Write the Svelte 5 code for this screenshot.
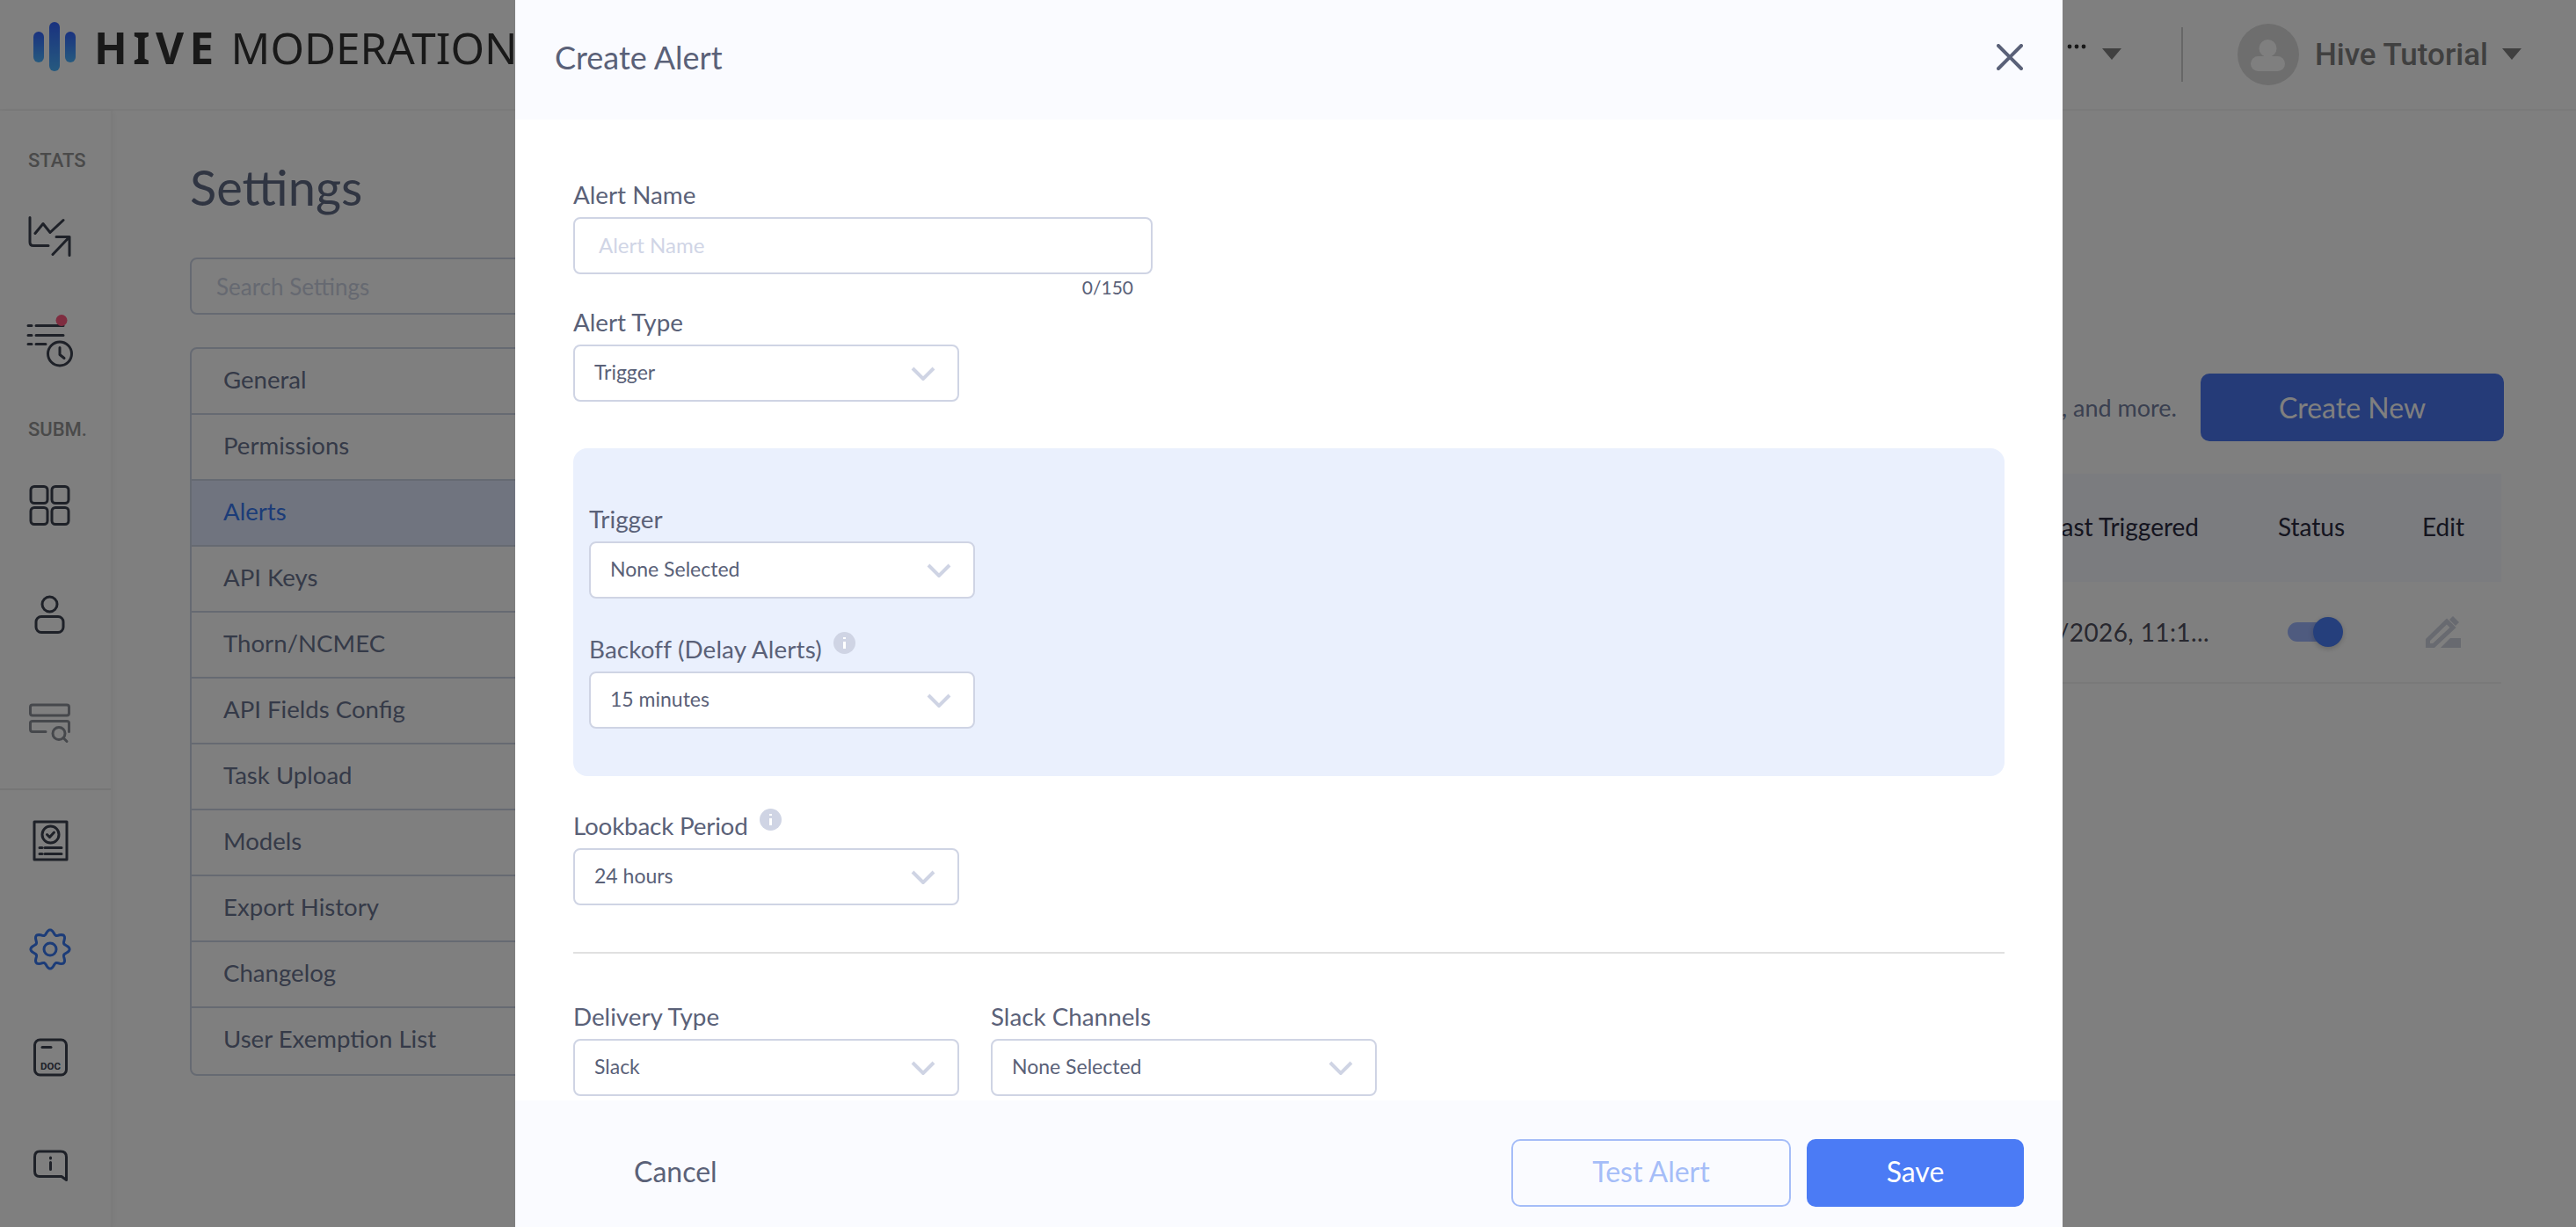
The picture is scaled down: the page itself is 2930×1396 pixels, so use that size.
<script lang="ts">
	const settingsItems = ['General', 'Permissions', 'Alerts', 'API Keys', 'Thorn/NCMEC', 'API Fields Config', 'Task Upload', 'Models', 'Export History', 'Changelog', 'User Exemption List'];

	// wavy 8-lobe outline for the gear icon
	const gearPath = (() => {
		const pts = [];
		for (let i = 0; i < 96; i++) {
			const a = (i / 96) * Math.PI * 2;
			const r = 19.5 + 2.6 * Math.cos(a * 8);
			pts.push(`${(57.5 + r * Math.cos(a - Math.PI / 2)).toFixed(2)} ${(1079.5 + r * Math.sin(a - Math.PI / 2)).toFixed(2)}`);
		}
		return 'M' + pts.join('L') + 'Z';
	})();
</script>

<div class="page">
	<header class="topbar">
		<div class="logo">
			<svg width="48" height="56" viewBox="0 0 48 56">
				<defs>
					<linearGradient id="lg" x1="0" y1="0" x2="0" y2="1">
						<stop offset="0" stop-color="#3464ff" />
						<stop offset="1" stop-color="#4cb4ff" />
					</linearGradient>
				</defs>
				<rect x="0" y="11" width="12" height="35" rx="6" fill="url(#lg)" />
				<rect x="18" y="0" width="12" height="56" rx="6" fill="url(#lg)" />
				<rect x="36" y="11" width="12" height="35" rx="6" fill="url(#lg)" />
			</svg>
			<span class="logo-text"><b>HIVE</b> MODERATION</span>
		</div>
		<div class="top-right">
			<svg class="dots" width="22" height="6" viewBox="0 0 22 6">
				<circle cx="3" cy="3" r="2.4" /><circle cx="11" cy="3" r="2.4" /><circle cx="19" cy="3" r="2.4" />
			</svg>
			<span class="caret"></span>
			<span class="vr"></span>
			<svg class="avatar" width="70" height="70" viewBox="0 0 70 70">
				<circle cx="35" cy="35" r="35" fill="#dcdcdc" />
				<circle cx="34.500" cy="28" r="10" fill="#fff" />
				<rect x="15" y="37" width="39" height="17" rx="8.500" fill="#fff" />
			</svg>
			<span class="user">Hive Tutorial</span>
			<span class="caret"></span>
		</div>
	</header>

	<div class="main">
		<nav class="sidebar">
			<div class="side-label">STATS</div>
			<div class="side-item">
				<svg class="ic" width="60" height="60" viewBox="27 237.500 60 60">
					<path d="M34 247V275Q34 279 38 279H55M40 265L49 254L57 264L72 250M60 289L79 269M64 269H79V290" />
				</svg>
			</div>
			<div class="side-item">
				<svg class="ic" width="70" height="70" viewBox="22 355.500 70 70">
					<path d="M41 370H72M41 381H72M41 391H52M32 370H36M32 381H36M32 391H36" />
					<circle cx="68" cy="402" r="13.500" />
					<path d="M68 395V403L73 407" />
					<circle class="dot" cx="70" cy="364" r="6.500" />
				</svg>
			</div>
			<div class="side-label second">SUBM.</div>
			<div class="side-item">
				<svg class="ic" width="60" height="60" viewBox="27 543.500 60 60">
					<rect x="35" y="553" width="19" height="19" rx="4" />
					<rect x="59" y="553" width="19" height="19" rx="4" />
					<rect x="35" y="577" width="19" height="19" rx="4" />
					<rect x="59" y="577" width="19" height="19" rx="4" />
				</svg>
			</div>
			<div class="side-item">
				<svg class="ic" width="60" height="60" viewBox="27 666.500 60 60">
					<circle cx="56.500" cy="687" r="8.500" />
					<rect x="41" y="701" width="31" height="18" rx="6" />
				</svg>
			</div>
			<div class="side-item">
				<svg class="ic faded" width="60" height="60" viewBox="27 789.500 60 60">
					<rect x="34.500" y="801.500" width="44" height="12" rx="2.500" />
					<path d="M52 832H37Q34.500 832 34.500 829V822Q34.500 820 37 820H76Q78.500 820 78.500 822V832" />
					<circle cx="67" cy="834" r="7" />
					<path d="M72 839L76 843" />
				</svg>
			</div>
			<div class="side-sep"></div>
			<div class="side-item">
				<svg class="ic" width="60" height="60" viewBox="27 930.500 60 60">
					<rect x="39" y="934.500" width="37" height="43" />
					<circle cx="57.500" cy="949" r="9.500" />
					<path d="M53.500 949L56.500 952L61.500 946.500M45 964H48M51 964H70M45 971H48M51 971H70" />
				</svg>
			</div>
			<div class="side-item">
				<svg class="ic gear" width="60" height="60" viewBox="27.500 1053.500 60 60">
					<path d={gearPath} />
					<circle cx="57.500" cy="1079.500" r="7" />
				</svg>
			</div>
			<div class="side-item">
				<svg class="ic" width="60" height="60" viewBox="27 1176.500 60 60">
					<rect x="39.500" y="1182.500" width="36" height="40" rx="6" />
					<path d="M48 1191H58" />
					<text x="57.500" y="1216" class="doc">DOC</text>
				</svg>
			</div>
			<div class="side-item">
				<svg class="ic" width="60" height="60" viewBox="27 1299.500 60 60">
					<path d="M45 1309.500H69Q75.500 1309.500 75.500 1316V1342L70 1338H45Q39.500 1338 39.500 1332V1316Q39.500 1309.500 45 1309.500Z" />
					<path d="M57.500 1322V1330M57.500 1316.500V1317.500" />
				</svg>
			</div>
		</nav>

		<section class="content">
			<div class="settings-col">
				<h1>Settings</h1>
				<div class="search">Search Settings</div>
				<ul class="settings-list">
					{#each settingsItems as item}
						<li class:active={item === 'Alerts'}>{item}</li>
					{/each}
				</ul>
			</div>
			<div class="alerts-col">
				<div class="alerts-head">
					<span class="blurb">Set up alerts for model changes, and more.</span>
					<button class="create">Create New</button>
				</div>
				<div class="table">
					<div class="t-row t-header">
						<span>Name</span>
						<span class="last">Last Triggered</span>
						<span>Status</span>
						<span>Edit</span>
					</div>
					<div class="t-row t-body">
						<span>Alert</span>
						<span class="last date">1/7/2026, 11:1...</span>
						<span class="toggle"><i></i></span>
						<svg class="edit" width="40" height="36" viewBox="0 0 40 36">
							<path class="outline" d="M2.500 33.500V27L24 6L31 13L9 33.500Z" />
							<path d="M27 4L31 0L38 7L34 11Z" />
							<path d="M28 25H40V36H17Z" />
						</svg>
					</div>
				</div>
			</div>
		</section>
	</div>
</div>

<div class="overlay">
	<div class="modal">
		<div class="modal-head">
			<span class="modal-title">Create Alert</span>
			<svg class="close" width="30" height="30" viewBox="0 0 30 30">
				<path d="M2 2L28 28M28 2L2 28" />
			</svg>
		</div>

		<div class="modal-body">
			<div class="field">
				<div class="label">Alert Name</div>
				<div class="input">Alert Name</div>
				<div class="counter">0/150</div>
			</div>
			<div class="field">
				<div class="label">Alert Type</div>
				{@render select('Trigger')}
			</div>

			<div class="panel">
				<div class="field">
					<div class="label">Trigger</div>
					{@render select('None Selected')}
				</div>
				<div class="field backoff">
					<div class="label">Backoff (Delay Alerts) {@render info()}</div>
					{@render select('15 minutes')}
				</div>
			</div>

			<div class="field lookback">
				<div class="label">Lookback Period {@render info()}</div>
				{@render select('24 hours')}
			</div>

			<hr />

			<div class="delivery">
				<div class="field">
					<div class="label">Delivery Type</div>
					{@render select('Slack')}
				</div>
				<div class="field">
					<div class="label">Slack Channels</div>
					{@render select('None Selected')}
				</div>
			</div>
		</div>

		<div class="modal-foot">
			<button class="cancel">Cancel</button>
			<div class="foot-right">
				<button class="test">Test Alert</button>
				<button class="save">Save</button>
			</div>
		</div>
	</div>
</div>

{#snippet select(value)}
	<div class="select">
		<span>{value}</span>
		<svg width="28" height="16" viewBox="0 0 28 16"><path d="M2 2L14 14L26 2" /></svg>
	</div>
{/snippet}

{#snippet info()}
	<svg class="info" width="25" height="25" viewBox="0 0 25 25">
		<circle cx="12.500" cy="12.500" r="12.500" />
		<path d="M12.500 11V19M12.500 6V8" />
	</svg>
{/snippet}

<style>
	:global(body) {
		margin: 0;
		overflow: hidden;
	}

	.page {
		width: 2930px;
		height: 1396px;
		background: #fff;
		font-family: Lato, sans-serif;
		display: flex;
		flex-direction: column;
		overflow: hidden;
	}

	.topbar {
		height: 126px;
		flex: none;
		box-sizing: border-box;
		display: flex;
		align-items: center;
		justify-content: space-between;
		padding: 0 62px 0 38px;
		border-bottom: 2px solid #f5f5f5;
	}

	.logo {
		display: flex;
		align-items: center;
		gap: 21px;
		margin-top: -18px;
	}

	.logo-text {
		font-family: 'Noto Sans', sans-serif;
		font-size: 49.400px;
		color: #333;
		white-space: nowrap;
	}

	.logo-text b {
		letter-spacing: 6.500px;
	}

	.top-right {
		display: flex;
		align-items: center;
	}

	.dots {
		fill: #333;
		margin: -18px 18px 0 0;
	}

	.caret {
		width: 0;
		height: 0;
		border-left: 11px solid transparent;
		border-right: 11px solid transparent;
		border-top: 13px solid #808080;
		margin-top: -2px;
	}

	.vr {
		width: 2px;
		height: 62px;
		background: #cfcfcf;
		margin: 0 62px 0 68px;
	}

	.user {
		font-family: Roboto, sans-serif;
		font-weight: 500;
		font-size: 35px;
		color: #808080;
		margin: 0 16px 0 18px;
	}

	.main {
		flex: 1;
		display: flex;
		min-height: 0;
	}

	.sidebar {
		width: 128px;
		flex: none;
		box-sizing: border-box;
		padding: 30px 0 0;
		border-right: 2px solid #f6f6f6;
		box-shadow: 2px 0 6px rgba(0, 0, 0, 0.04);
	}

	.side-label {
		width: 114px;
		height: 50px;
		line-height: 54px;
		padding-left: 32px;
		box-sizing: border-box;
		font-family: Roboto, sans-serif;
		font-weight: 500;
		font-size: 22px;
		color: #949494;
	}

	.side-label.second {
		margin-top: 10px;
	}

	.side-item {
		width: 114px;
		height: 123px;
		display: flex;
		align-items: center;
		justify-content: center;
	}

	.side-sep {
		height: 2px;
		margin-top: 16px;
		background: #ececec;
	}

	.ic {
		fill: none;
		stroke: #3c4250;
		stroke-width: 3;
		stroke-linecap: round;
		stroke-linejoin: round;
		overflow: visible;
	}

	.ic.faded {
		stroke: #8c9098;
	}

	.ic.gear {
		stroke: #3878f0;
	}

	.ic .dot {
		fill: #ff5a80;
		stroke: none;
	}

	.ic .doc {
		font-family: Roboto, sans-serif;
		font-weight: 700;
		font-size: 11.500px;
		text-anchor: middle;
		fill: #3c4250;
		stroke: none;
	}

	.content {
		flex: 1;
		display: flex;
		padding: 0 85px 0 88px;
		min-width: 0;
	}

	.settings-col {
		width: 1000px;
		flex: none;
	}

	h1 {
		margin: 50px 0 0;
		height: 74px;
		line-height: 74px;
		font-size: 56px;
		font-weight: 400;
		color: #606a84;
	}

	.search {
		margin-top: 43px;
		height: 65px;
		box-sizing: border-box;
		border: 2px solid #ccd4e4;
		border-radius: 8px;
		padding-left: 28px;
		line-height: 63px;
		font-size: 26px;
		color: #ccd2e2;
	}

	.settings-list {
		list-style: none;
		margin: 37px 0 0;
		padding: 0;
		border: 2px solid #ccd4e4;
		border-radius: 8px;
	}

	.settings-list li {
		height: 75px;
		box-sizing: border-box;
		border-bottom: 2px solid #ccd4e4;
		padding-left: 36px;
		line-height: 69px;
		font-size: 27.600px;
		color: #6a7490;
	}

	.settings-list li:last-child {
		border-bottom: none;
	}

	.settings-list li.active {
		background: #e0e8ff;
		color: #3878f0;
	}

	.alerts-col {
		flex: 1;
		min-width: 0;
		padding-left: 120px;
	}

	.alerts-head {
		margin: 299px -3px 0 0;
		height: 77px;
		display: flex;
		justify-content: flex-end;
		align-items: center;
		gap: 27px;
		font-size: 27px;
		color: #7480a0;
	}

	.create {
		width: 345px;
		height: 77px;
		border: none;
		border-radius: 10px;
		background: #4a76f0;
		color: #fff;
		font: inherit;
		font-size: 32px;
	}

	.table {
		margin-top: 37px;
		font-size: 28px;
	}

	.t-row {
		display: grid;
		grid-template-columns: 1fr 266px 164px 90px;
		align-items: center;
	}

	.t-header {
		height: 123px;
		box-sizing: border-box;
		padding-bottom: 3px;
		background: #f6f8fe;
		color: #2a2a3e;
	}

	.t-body {
		height: 114px;
		border-bottom: 2px solid #f2f2f2;
		color: #50505e;
	}

	.last {
		justify-self: end;
		margin-right: 90px;
		white-space: nowrap;
	}

	.date {
		margin-right: 78px;
		letter-spacing: 0.4px;
	}

	.toggle {
		display: block;
		width: 48px;
		height: 22px;
		margin-left: 11px;
		border-radius: 11px;
		background: #9eb6fe;
		position: relative;
	}

	.toggle i {
		position: absolute;
		right: -15px;
		top: -6px;
		width: 34px;
		height: 34px;
		border-radius: 50%;
		background: #4a7ef8;
		box-shadow: 0 2px 6px rgba(0, 0, 0, 0.2);
	}

	.edit {
		fill: #d0d4e0;
		margin-left: 4px;
	}

	.edit .outline {
		fill: none;
		stroke: #d0d4e0;
		stroke-width: 5;
	}

	.overlay {
		position: fixed;
		inset: 0;
		background: rgba(0, 0, 0, 0.5);
		display: flex;
		justify-content: flex-start;
		padding-left: 586px;
		font-family: Lato, sans-serif;
	}

	.modal {
		width: 1760px;
		height: 100%;
		background: #fff;
		display: flex;
		flex-direction: column;
		color: #5a6178;
	}

	.modal-head {
		height: 136px;
		flex: none;
		box-sizing: border-box;
		padding: 0 45px 6px 45px;
		background: #fafbff;
		display: flex;
		align-items: center;
		justify-content: space-between;
	}

	.modal-title {
		font-size: 36px;
	}

	.close path {
		fill: none;
		stroke: #5a6178;
		stroke-width: 4;
		stroke-linecap: round;
	}

	.modal-body {
		flex: 1;
		min-height: 0;
		overflow: hidden;
		box-sizing: border-box;
		padding: 67px 66px 0;
	}

	.field {
		width: 439px;
	}

	.label {
		height: 36px;
		margin-bottom: 8px;
		line-height: 38px;
		font-size: 27.800px;
		display: flex;
		gap: 13px;
		white-space: nowrap;
	}

	.backoff .label {
		letter-spacing: 0.15px;
	}

	.lookback .label {
		letter-spacing: -0.2px;
	}

	.info {
		fill: #cfd4e4;
		flex: none;
		margin-top: -1px;
	}

	.info path {
		stroke: #fff;
		stroke-width: 3;
	}

	.input {
		width: 659px;
		height: 65px;
		box-sizing: border-box;
		border: 2px solid #cfd4e4;
		border-radius: 8px;
		padding-left: 27px;
		line-height: 59px;
		font-size: 24px;
		color: #d0d5e6;
	}

	.counter {
		width: 637px;
		height: 36px;
		line-height: 30px;
		text-align: right;
		font-size: 21px;
	}

	.select {
		width: 439px;
		height: 65px;
		box-sizing: border-box;
		border: 2px solid #cfd4e4;
		border-radius: 8px;
		background: #fff;
		padding: 0 25px 4px 22px;
		display: flex;
		align-items: center;
		justify-content: space-between;
		font-size: 23px;
	}

	.select path {
		fill: none;
		stroke: #cfd4e4;
		stroke-width: 4;
	}

	.select svg {
		margin-top: 4px;
	}

	.panel {
		margin-top: 53px;
		background: #eaf0fd;
		border-radius: 16px;
		padding: 62px 18px 54px;
	}

	.backoff {
		margin-top: 39px;
	}

	.panel + .field {
		margin-top: 38px;
	}

	hr {
		margin: 53px 0;
		border: none;
		height: 2px;
		background: #e0e0e0;
	}

	.delivery {
		display: flex;
		gap: 36px;
	}

	.modal-foot {
		height: 144px;
		flex: none;
		box-sizing: border-box;
		padding: 44px 44px 0 135px;
		background: #fafbff;
		display: flex;
		justify-content: space-between;
		align-items: flex-start;
	}

	.modal-foot button {
		font: inherit;
		font-size: 32px;
		padding: 0 0 4px;
	}

	.cancel {
		height: 77px;
		border: none;
		background: none;
		color: #5a6178;
	}

	.foot-right {
		display: flex;
		gap: 18px;
	}

	.test {
		width: 318px;
		height: 77px;
		box-sizing: border-box;
		border: 2px solid #a5bdf8;
		border-radius: 10px;
		background: transparent;
		color: #a5bdf8;
	}

	.save {
		width: 247px;
		height: 77px;
		border: none;
		border-radius: 10px;
		background: #4b7bf5;
		color: #fff;
	}
</style>
